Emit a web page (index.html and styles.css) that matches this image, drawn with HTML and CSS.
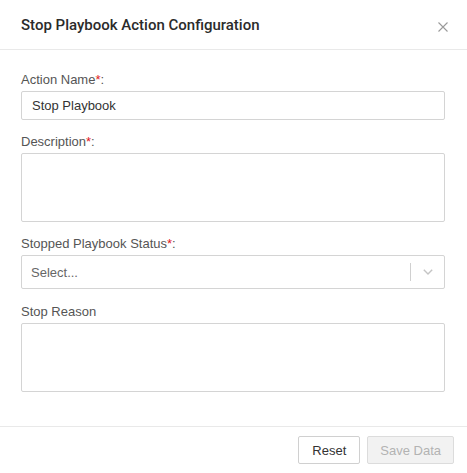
FILE: index.html
```html
<!DOCTYPE html>
<html>
<head>
<meta charset="utf-8">
<link rel="stylesheet" href="styles.css">
</head>
<body>
<div class="modal">
  <div class="modal-header">
    <h1 class="modal-title">Stop Playbook Action Configuration</h1>
    <button class="close-btn" aria-label="Close">
      <svg width="10" height="10" viewBox="0 0 10 10"><path d="M0.5 0.5 L9.5 9.5 M9.5 0.5 L0.5 9.5" stroke="#9a9a9a" stroke-width="1.1" fill="none"/></svg>
    </button>
  </div>
  <div class="modal-body">
    <div class="field">
      <label class="label">Action Name<span class="req">*</span>:</label>
      <div class="input">Stop Playbook</div>
    </div>
    <div class="field">
      <label class="label">Description<span class="req">*</span>:</label>
      <div class="textarea"></div>
    </div>
    <div class="field wide">
      <label class="label">Stopped Playbook Status<span class="req">*</span>:</label>
      <div class="select">
        <span class="placeholder">Select...</span>
        <span class="sep"></span>
        <span class="chev">
          <svg width="10" height="6" viewBox="0 0 10 6"><path d="M0.8 0.8 L5 5 L9.2 0.8" stroke="#c4c4c4" stroke-width="1.4" fill="none"/></svg>
        </span>
      </div>
    </div>
    <div class="field last">
      <label class="label">Stop Reason</label>
      <div class="textarea"></div>
    </div>
  </div>
  <div class="modal-footer">
    <button class="btn">Reset</button>
    <button class="btn disabled">Save Data</button>
  </div>
</div>
</body>
</html>
```
FILE: styles.css
```css
* { box-sizing: border-box; }
html, body { margin: 0; padding: 0; background: #fff; }
body { font-family: "Liberation Sans", Arial, sans-serif; color: #333; }
.modal { width: 467px; height: 473px; display: flex; flex-direction: column; }
.modal-header {
  height: 50px;
  border-bottom: 1px solid #e9e9e9;
  display: flex;
  align-items: center;
  justify-content: space-between;
  padding: 0 19px 0 21px;
}
.modal-title { margin: 0; font-family: Roboto, "Liberation Sans", sans-serif; font-size: 15px; font-weight: 500; color: #2b2b2b; }
.close-btn { border: 0; background: none; padding: 0; width: 10px; height: 10px; display: flex; position: relative; top: 2px; }
.modal-body { padding: 22px 22px 0 21px; flex: 1; }
.field { margin-bottom: 14px; }
.field.wide { margin-bottom: 15px; }
.field.last { margin-bottom: 0; }
.label { display: block; font-size: 13px; line-height: 16px; color: #555; margin-bottom: 3px; }
.req { color: #e0191c; }
.input {
  height: 29px; border: 1px solid #d4d4d4; border-radius: 2px;
  padding: 0 10px; font-size: 13px; line-height: 27px; color: #333;
}
.textarea { height: 69px; border: 1px solid #d4d4d4; border-radius: 2px; }
.select {
  height: 34px; border: 1px solid #d4d4d4; border-radius: 2px;
  display: flex; align-items: center; padding-left: 9px;
}
.placeholder { flex: 1; font-size: 13px; color: #666; }
.sep { width: 1px; height: 18px; background: #d0d0d0; }
.chev { width: 33px; display: flex; justify-content: center; align-items: center; }
.modal-footer {
  border-top: 1px solid #e9e9e9;
  height: 47px;
  display: flex; justify-content: flex-end; align-items: center;
  gap: 7px; padding-right: 13px;
}
.btn {
  height: 28px; padding: 0 13px; border: 1px solid #d0d0d0; border-radius: 2px;
  background: #fff; font-family: inherit; font-size: 13px; color: #333;
}
.btn.disabled { padding: 0 12px; background: #f2f2f2; color: #b3b3b3; border-color: #dcdcdc; }
```
